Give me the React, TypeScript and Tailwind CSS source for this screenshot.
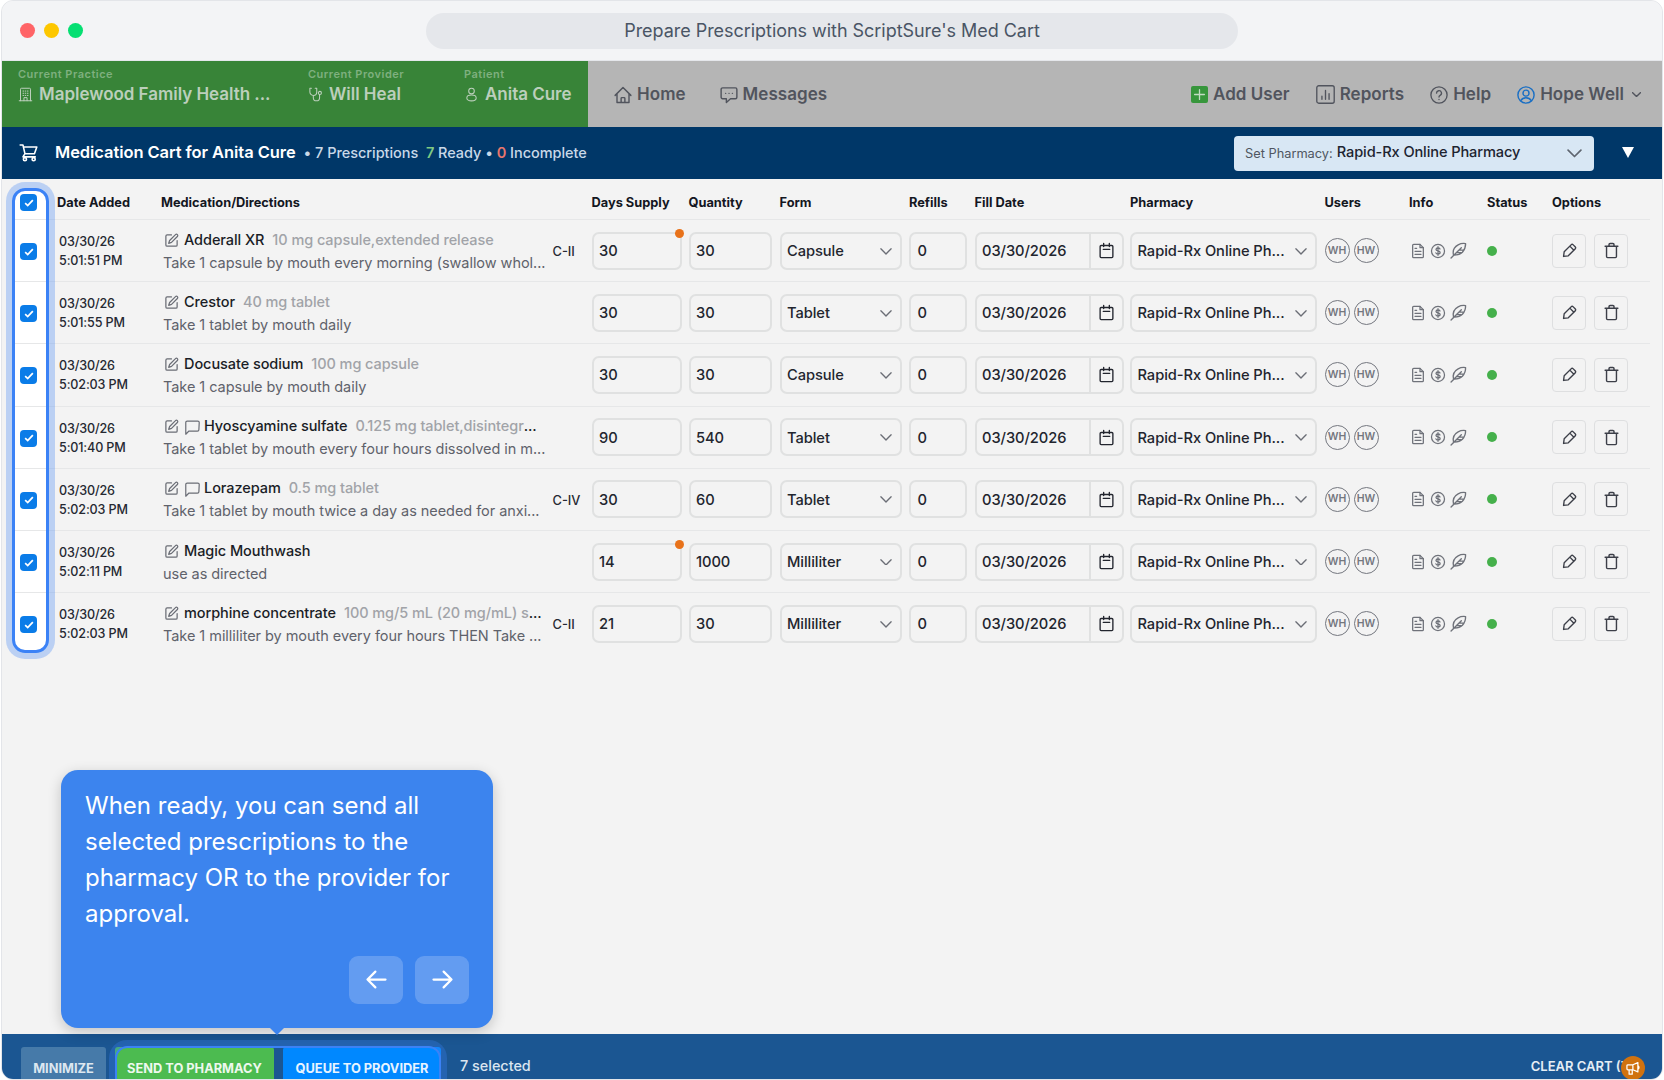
import type { ReactNode } from 'react';

type Rx = {
    time: string;
    name: string;
    strength?: string;
    cut?: boolean;
    note?: boolean;
    sig: string;
    schedule?: string;
    alert?: boolean;
    days: string;
    qty: string;
    form: string;
};

const prescriptions: Rx[] = [
    { time: '5:01:51 PM', name: 'Adderall XR', strength: '10 mg capsule,extended release', sig: 'Take 1 capsule by mouth every morning (swallow whol...', schedule: 'C-II', alert: true, days: '30', qty: '30', form: 'Capsule' },
    { time: '5:01:55 PM', name: 'Crestor', strength: '40 mg tablet', sig: 'Take 1 tablet by mouth daily', days: '30', qty: '30', form: 'Tablet' },
    { time: '5:02:03 PM', name: 'Docusate sodium', strength: '100 mg capsule', sig: 'Take 1 capsule by mouth daily', days: '30', qty: '30', form: 'Capsule' },
    { time: '5:01:40 PM', name: 'Hyoscyamine sulfate', strength: '0.125 mg tablet,disintegr', cut: true, note: true, sig: 'Take 1 tablet by mouth every four hours dissolved in m...', days: '90', qty: '540', form: 'Tablet' },
    { time: '5:02:03 PM', name: 'Lorazepam', strength: '0.5 mg tablet', note: true, sig: 'Take 1 tablet by mouth twice a day as needed for anxi...', schedule: 'C-IV', days: '30', qty: '60', form: 'Tablet' },
    { time: '5:02:11 PM', name: 'Magic Mouthwash', sig: 'use as directed', alert: true, days: '14', qty: '1000', form: 'Milliliter' },
    { time: '5:02:03 PM', name: 'morphine concentrate', strength: '100 mg/5 mL (20 mg/mL) s', cut: true, sig: 'Take 1 milliliter by mouth every four hours THEN Take ...', schedule: 'C-II', days: '21', qty: '30', form: 'Milliliter' },
];

const columns =
    'grid grid-cols-[42px_104px_391px_39.5px_97px_91px_129.5px_65.5px_155.5px_194.5px_84.5px_78px_65px_98px]';

const field = 'flex items-center h-[38px] rounded-[7px] border-2 border-[#e0e1e1] pt-[1px] text-[14.7px] tracking-[-0.07px] font-medium text-[#22252e]';

function Icon({ className, width = 1.5, children }: { className: string; width?: number; children: ReactNode }) {
    return (
        <svg
            viewBox="0 0 24 24"
            fill="none"
            stroke="currentColor"
            strokeWidth={width}
            strokeLinecap="round"
            strokeLinejoin="round"
            className={`shrink-0 ${className}`}
        >
            {children}
        </svg>
    );
}

function Chevron({ className }: { className: string }) {
    return (
        <svg viewBox="0 0 14 8" fill="none" stroke="currentColor" strokeWidth={1.6} strokeLinecap="round" strokeLinejoin="round" className={`shrink-0 ${className}`}>
            <path d="M1 1l6 6 6-6" />
        </svg>
    );
}

function Checkbox() {
    return (
        <div className="ml-[5px] mt-[2px] flex size-[17px] items-center justify-center rounded-[4px] bg-[#0a7ce8]">
            <svg viewBox="0 0 12 10" fill="none" stroke="white" strokeWidth={2.2} className="w-[10px] h-[8px]">
                <path d="M1.2 5.2l3.2 3L10.8 1.4" />
            </svg>
        </div>
    );
}

function NavItem({ label, children }: { label: string; children: ReactNode }) {
    return (
        <div className="flex items-center gap-[5px] text-[17px] font-semibold tracking-[0.05px] text-[#51545d]">
            {children}
            <span>{label}</span>
        </div>
    );
}

function HeaderBlock({ className, label, value, children }: { className: string; label: string; value: string; children: ReactNode }) {
    return (
        <div className={`shrink-0 ${className}`}>
            <div className="text-[11px] leading-[14px] font-semibold tracking-[0.5px] text-[#7fb07f]">{label}</div>
            <div className="mt-[2px] flex items-center gap-1.5 text-[17px] leading-[22px] font-semibold tracking-[-0.03px] text-[#bccfbc]">
                {children}
                <span className="whitespace-nowrap">{value}</span>
            </div>
        </div>
    );
}

function Row({ rx }: { rx: Rx }) {
    return (
        <div className={`${columns} relative h-[62.2px] items-center border-b border-[#e6e7e8] last:border-b-transparent whitespace-nowrap`}>
            <Checkbox />
            <div className="pl-[2px] pt-[1px] text-[12.6px] tracking-[-0.15px] leading-[19px] font-medium text-[#262932]">
                <div>03/30/26</div>
                <div>{rx.time}</div>
            </div>
            <div className="pl-[3px] text-[14.5px] tracking-[-0.07px]">
                <div className="flex h-[22px] items-center font-medium text-[#1a1d26]">
                    <Icon className="size-[15px] mt-px mr-[5px] text-[#6b6e76]" width={2}>
                        <path d="M12 3H5a2 2 0 0 0-2 2v14a2 2 0 0 0 2 2h14a2 2 0 0 0 2-2v-7" />
                        <path d="M18.4 2.6a2.1 2.1 0 0 1 3 3L12 15l-4.5 1.5L9 12z" />
                    </Icon>
                    {rx.note && (
                        <Icon className="size-[17px] mt-[2px] mr-[3px] text-[#6b6e76]" width={1.7}>
                            <path d="M21 15a2 2 0 0 1-2 2H7l-4.5 4.5V5a2 2 0 0 1 2-2h15a2 2 0 0 1 2 2z" />
                        </Icon>
                    )}
                    <span>{rx.name}</span>
                    {rx.strength && <span className="ml-2 text-[#a1a3a8]">{rx.strength}</span>}
                    {rx.cut && <span>...</span>}
                </div>
                <div className="-ml-px h-[22px] leading-[23px] tracking-[-0.05px] text-[#5f626b]">{rx.sig}</div>
            </div>
            <div className="pl-[0.5px] pt-[2px] text-[12.8px] font-medium text-[#262932]">{rx.schedule}</div>
            <div className={`${field} relative w-[90px] pl-[5.5px]`}>
                {rx.days}
                {rx.alert && <span className="absolute -right-[4px] -top-[5px] size-[9px] rounded-full bg-[#e8721a]" />}
            </div>
            <div className={`${field} w-[83px] pl-[5.5px]`}>{rx.qty}</div>
            <div className={`${field} w-[122px] justify-between pl-[5.5px] pr-[8px]`}>
                {rx.form}
                <Chevron className="w-[12px] text-[#6b6e76]" />
            </div>
            <div className={`${field} w-[58px] pl-[6.5px]`}>0</div>
            <div className={`${field} w-[149px] pl-[5.5px]`}>
                <span className="flex-1">03/30/2026</span>
                <span className="-mt-px flex h-[34px] w-[33px] items-center justify-center border-l-2 border-[#e0e1e1]">
                    <Icon className="size-[17px]" width={1.9}>
                        <rect x="3" y="5" width="18" height="17" rx="1.5" />
                        <path d="M8 2v4.5M16 2v4.5M7.5 10.5h9" />
                    </Icon>
                </span>
            </div>
            <div className={`${field} w-[187px] justify-between pl-[5.5px] pr-[8px]`}>
                Rapid-Rx Online Ph...
                <Chevron className="w-[12px] text-[#6b6e76]" />
            </div>
            <div className="flex gap-[4px] text-[10.5px] font-semibold text-[#74777f]">
                <span className="flex size-[25px] items-center justify-center rounded-full border border-[#74777f]">WH</span>
                <span className="flex size-[25px] items-center justify-center rounded-full border border-[#74777f]">HW</span>
            </div>
            <div className="flex items-center gap-[4px] pl-px text-[#6f727a]">
                <Icon className="size-[16px]" width={1.9}>
                    <path d="M4 3.5A1.5 1.5 0 0 1 5.5 2H15l5 5v13.5a1.5 1.5 0 0 1-1.5 1.5h-13A1.5 1.5 0 0 1 4 20.5z" />
                    <path d="M15 2v5h5M7.5 8H10M7.5 12.5h9M7.5 17h9" />
                </Icon>
                <Icon className="size-[16px]" width={1.9}>
                    <circle cx="12" cy="12" r="9.8" />
                    <path d="M15 9c-.5-1-1.5-1.5-3-1.5-1.8 0-3 .8-3 2.2 0 3.2 6.2 1.3 6.2 4.6 0 1.4-1.3 2.2-3.2 2.2-1.6 0-2.8-.6-3.2-1.7M12 5.5v13" />
                </Icon>
                <Icon className="size-[17px]" width={1.9}>
                    <path d="M1.5 22.5L16 8M5 18.5C3.5 12.5 6 7 11.500 4 15 2 18.500 1.800 22 2.200c.2 5-1.500 9-4.500 12.300-3 3-7 4.300-12.500 4zM9 15h6.5M12.5 11.5h6" />
                </Icon>
            </div>
            <span className="size-[10px] rounded-full bg-[#45b04b]" />
            <div className="flex gap-[8px] text-[#3c3f48]">
                <span className="flex size-[34px] items-center justify-center rounded-[4px] border border-[#dedfe0]">
                    <Icon className="size-[15px]" width={2.2}>
                        <path d="M2.5 21.5l1-7.5L14.5 3a2.5 2.5 0 0 1 3.5 0l3 3a2.5 2.5 0 0 1 0 3.5L10 20.5zM12.5 5l6.5 6.5" />
                    </Icon>
                </span>
                <span className="flex size-[34px] items-center justify-center rounded-[4px] border border-[#dedfe0]">
                    <Icon className="size-[17px]" width={2}>
                        <path d="M3 6h18M5 6v14.5A1.5 1.5 0 0 0 6.5 22h11a1.5 1.5 0 0 0 1.5-1.5V6M8.5 6V3.5A1.5 1.5 0 0 1 10 2h4a1.5 1.5 0 0 1 1.5 1.5V6" />
                    </Icon>
                </span>
            </div>
        </div>
    );
}

export default function App() {
    return (
        <div className="h-[1080px] w-[1664px] overflow-hidden bg-white px-px font-[Inter,sans-serif]">
            <div className="relative flex h-full flex-col overflow-hidden rounded-[12px] border border-[#e3e5e9] bg-[#f3f3f3]">

                {/* Window title */}
                <div className="flex h-[60px] shrink-0 items-center border-b border-[#e5e7eb] bg-[#f3f4f6]">
                    <div className="flex w-[424px] gap-[9px] pl-[18px]">
                        <span className="size-[15px] rounded-full bg-[#ff6467]" />
                        <span className="size-[15px] rounded-full bg-[#fdc700]" />
                        <span className="size-[15px] rounded-full bg-[#05df72]" />
                    </div>
                    <div className="flex h-[36px] w-[812px] items-center justify-center rounded-full bg-[#e5e7eb] text-[18px] tracking-[-0.04px] text-[#4a5565]">
                        Prepare Prescriptions with ScriptSure's Med Cart
                    </div>
                </div>

                {/* Practice header */}
                <div className="flex h-[66px] shrink-0 bg-[#b5b5b5]">
                    <div className="flex w-[586px] bg-[#388438] pl-[16px] pt-[6px]">
                        <HeaderBlock className="w-[290px]" label="Current Practice" value="Maplewood Family Health ...">
                            <Icon className="size-[15px]" width={1.6}>
                                <path d="M4 22V3.5A1.5 1.5 0 0 1 5.5 2h13A1.5 1.5 0 0 1 20 3.5V22M2 22h20M9.5 22v-5h5v5M8 6.5h1M11.5 6.5h1M15 6.5h1M8 10h1M11.5 10h1M15 10h1M8 13.5h1M11.5 13.5h1M15 13.5h1" />
                            </Icon>
                        </HeaderBlock>
                        <HeaderBlock className="w-[156px]" label="Current Provider" value="Will Heal">
                            <Icon className="size-[15px]" width={1.7}>
                                <path d="M5.5 2H3v6a5.5 5.5 0 0 0 11 0V2h-2.5M8.5 13.5V17a5 5 0 0 0 10 0v-5" />
                                <circle cx="19" cy="9.5" r="2.5" />
                            </Icon>
                        </HeaderBlock>
                        <HeaderBlock className="w-[120px]" label="Patient" value="Anita Cure">
                            <Icon className="size-[15px]" width={1.7}>
                                <circle cx="12" cy="6.5" r="4.5" />
                                <ellipse cx="12" cy="17.5" rx="7.5" ry="4.7" />
                            </Icon>
                        </HeaderBlock>
                    </div>
                    <div className="flex flex-1 items-center justify-between pt-[1px] pl-[26px] pr-[21px]">
                        <div className="flex gap-[34px]">
                            <NavItem label="Home">
                                <Icon className="size-[18px]" width={1.9}>
                                    <path d="M1.5 12.5L12 2l10.5 10.5M4 10v12h16V10M9.5 22v-5.5a1 1 0 0 1 1-1h3a1 1 0 0 1 1 1V22" />
                                </Icon>
                            </NavItem>
                            <NavItem label="Messages">
                                <Icon className="size-[18px]" width={1.9}>
                                    <path d="M3.5 2.5h17a2 2 0 0 1 2 2v10.5a2 2 0 0 1-2 2H14l-5.5 5v-5h-5a2 2 0 0 1-2-2V4.5a2 2 0 0 1 2-2zM7.5 9.8h.1M12 9.8h.1M16.5 9.8h.1" />
                                </Icon>
                            </NavItem>
                        </div>
                        <div className="flex gap-[26px]">
                            <NavItem label="Add User">
                                <span className="flex size-[17px] items-center justify-center rounded-[2px] bg-[#37963c] text-[#c2dcc3]">
                                    <Icon className="size-[13px]" width={2.4}>
                                        <path d="M12 3v18M3 12h18" />
                                    </Icon>
                                </span>
                            </NavItem>
                            <NavItem label="Reports">
                                <Icon className="size-[19px]" width={1.7}>
                                    <rect x="1" y="1" width="22" height="22" rx="2.5" />
                                    <path d="M7.5 18v-4M12 18V7M16.5 18v-7" />
                                </Icon>
                            </NavItem>
                            <NavItem label="Help">
                                <Icon className="size-[18px]" width={1.8}>
                                    <circle cx="12" cy="12" r="10.8" />
                                    <path d="M8.7 9.5a3.3 3.3 0 1 1 4.8 3c-1 .5-1.5 1-1.5 2.2M12 18v.1" />
                                </Icon>
                            </NavItem>
                            <div className="flex items-center gap-[8px] text-[#51545d]">
                                <NavItem label="Hope Well">
                                    <Icon className="size-[18px] text-[#1a6fc4]" width={1.9}>
                                        <circle cx="12" cy="12" r="10.8" />
                                        <circle cx="12" cy="9.5" r="4" />
                                        <path d="M5 19.5c1.5-2.5 4-3.8 7-3.8s5.5 1.3 7 3.8" />
                                    </Icon>
                                </NavItem>
                                <Chevron className="w-[9px] stroke-[2.2]" />
                            </div>
                        </div>
                    </div>
                </div>

                {/* Cart title bar */}
                <div className="flex h-[51.5px] shrink-0 items-center bg-[#003768] pl-[17px] text-white">
                    <Icon className="size-[19px]" width={2}>
                        <path d="M1.5 2.5h3.5l2.5 11h12l3-8.5H5.5M7.5 13.5l-2.5 4h15.5" />
                        <circle cx="7.5" cy="20.5" r="2" />
                        <circle cx="18.5" cy="20.5" r="2" />
                    </Icon>
                    <span className="ml-[17px] text-[16.5px] tracking-[-0.07px] font-semibold">Medication Cart for Anita Cure</span>
                    <span className="ml-[8px] whitespace-pre text-[14.5px] tracking-[-0.04px] font-medium text-[#c9d9e8]">
                        • 7 Prescriptions{'  '}
                        <span className="font-semibold text-[#7fca83]">7</span> Ready • <span className="font-semibold text-[#e8766c]">0</span> Incomplete
                    </span>
                    <div className="mt-[1px] ml-auto flex h-[35px] w-[360px] items-center rounded-[4px] bg-[#d8e7f4] pl-[11px] pr-[12px]">
                        <span className="text-[12.8px] text-[#4f5661]">Set Pharmacy:</span>
                        <span className="ml-[4px] flex-1 text-[14.6px] tracking-[-0.11px] font-medium text-[#1d2430]">Rapid-Rx Online Pharmacy</span>
                        <Chevron className="w-[15px] text-[#5f6670]" />
                    </div>
                    <span className="ml-[28px] mr-[28px] size-0 border-x-[6px] border-t-[11px] border-x-transparent border-t-white" />
                </div>

                {/* Prescriptions */}
                <div className="relative ml-[13px] w-[1635px] flex-1">
                    <div className="absolute -left-[3px] top-[11px] h-[462px] w-[36px] rounded-[13px] bg-white" />
                    <div className={`${columns} relative h-[41.5px] items-center whitespace-nowrap border-b border-[#e6e7e8] pt-[7px] text-[12.8px] font-bold text-[#14171f]`}>
                        <div className="-mt-[1px]">
                            <Checkbox />
                        </div>
                        <span>Date Added</span>
                        <span>Medication/Directions</span>
                        <span />
                        <span>Days Supply</span>
                        <span>Quantity</span>
                        <span>Form</span>
                        <span>Refills</span>
                        <span>Fill Date</span>
                        <span>Pharmacy</span>
                        <span>Users</span>
                        <span>Info</span>
                        <span>Status</span>
                        <span>Options</span>
                    </div>
                    <div>
                        {prescriptions.map((rx, i) => (
                            <Row key={i} rx={rx} />
                        ))}
                    </div>
                    <div className="pointer-events-none absolute -left-[3.5px] top-[9.5px] h-[464.5px] w-[37px] rounded-[13px] border-[3px] border-[#3b82f6] ring-[6px] ring-[#3b82f6]/30" />
                </div>

                {/* Cart actions */}
                <div className="relative flex h-[45px] shrink-0 bg-[#1b5692] pl-[19px] pt-[13px] text-[12.8px] font-bold text-white">
                    <div className="flex h-[43px] w-[85px] items-center justify-center rounded-[3px] bg-[#467aa9] pt-px text-[#dde7f0]">MINIMIZE</div>
                    <div className="relative ml-[9px] flex h-[43px] gap-[9px]">
                        <div className="flex w-[159px] items-center justify-center rounded-[3px] bg-[#4cbb50] pt-px text-[#eef8ee]">SEND TO PHARMACY</div>
                        <div className="flex w-[158px] items-center justify-center rounded-[3px] bg-[#0088ff] pt-px text-[#e8f4ff]">QUEUE TO PROVIDER</div>
                        <div className="absolute inset-x-0 -top-[1px] h-[60px] rounded-[12px] border-[2.5px] border-[#3b82f6] ring-[6px] ring-[#3b82f6]/30" />
                    </div>
                    <span className="ml-[19px] mt-[8px] text-[14.4px] font-medium text-[#dbe6f0]">7 selected</span>
                    <span className="ml-auto mr-[29px] mt-[10px] text-[13px] font-semibold text-[#e6eef5]">CLEAR CART (7)</span>
                    <span className="absolute right-[17px] top-[22px] flex size-[24px] items-center justify-center rounded-full bg-[#d0720f]">
                        <Icon className="size-[15px]" width={2}>
                            <path d="M3 6h8l8-3.5v15L11 14H3a1.5 1.5 0 0 1-1.5-1.5v-5A1.5 1.5 0 0 1 3 6zM11 6v8M5 14v7h5v-7M19 7.5a3 3 0 0 1 0 5.5" />
                        </Icon>
                    </span>
                </div>

                {/* Tour step */}
                <div className="absolute left-[59px] top-[768.5px] flex h-[258px] w-[432px] flex-col justify-between rounded-[17px] bg-[#3c84ee] px-[24px] pb-[24px] pt-[18px] shadow-[0_4px_14px_rgba(0,0,0,0.2)]">
                    <p className="text-[24px] leading-[36px] text-white">
                        When ready, you can send all
                        <br />
                        selected prescriptions to the
                        <br />
                        pharmacy OR to the provider for
                        <br />
                        approval.
                    </p>
                    <div className="flex justify-end gap-[12px] text-white">
                        <span className="flex h-[48px] w-[54px] items-center justify-center rounded-[9px] bg-white/20">
                            <Icon className="size-[27px]" width={2}>
                                <path d="M20 12H4M11 5l-7 7 7 7" />
                            </Icon>
                        </span>
                        <span className="flex h-[48px] w-[54px] items-center justify-center rounded-[9px] bg-white/20">
                            <Icon className="size-[27px]" width={2}>
                                <path d="M4 12h16M13 5l7 7-7 7" />
                            </Icon>
                        </span>
                    </div>
                    <span className="absolute left-[209px] top-full size-0 border-x-[7px] border-t-[7px] border-x-transparent border-t-[#3c84ee]" />
                </div>
            </div>
        </div>
    );
}
